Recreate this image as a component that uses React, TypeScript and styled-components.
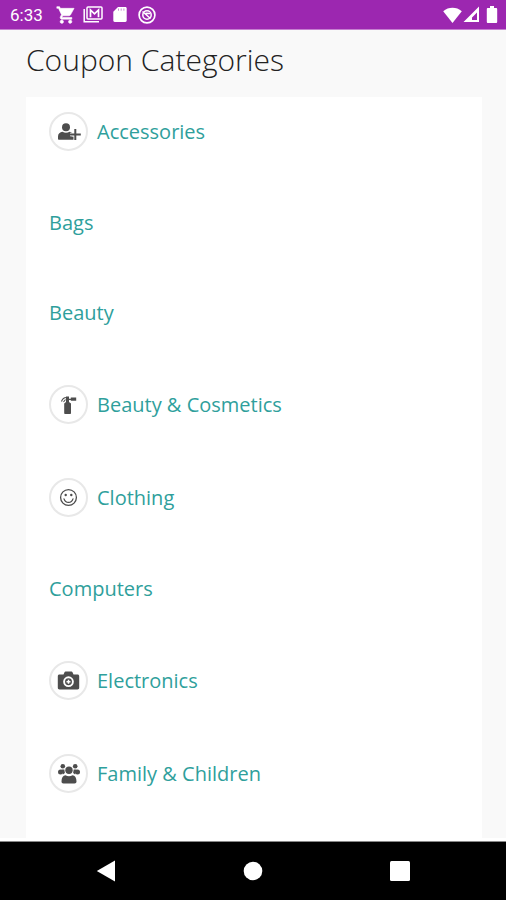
import React from "react";
import styled, { createGlobalStyle } from "styled-components";

const GlobalStyle = createGlobalStyle`
  *, *::before, *::after { box-sizing: border-box; }
  body { margin: 0; background: #f9f9f9; font-family: "Open Sans", "Noto Sans", sans-serif; }
`;

const Screen = styled.div`
  display: flex;
  flex-direction: column;
  height: 100vh;
  background: #f9f9f9;
`;

const StatusBar = styled.header`
  flex: none;
  display: flex;
  align-items: center;
  justify-content: space-between;
  height: 30px;
  padding: 0 8px 0 10px;
  background: #9c27b0;
  border-bottom: 1px solid #c57fd0;
  color: #fff;
`;

const StatusGroup = styled.div`
  display: flex;
  align-items: center;

  svg { display: block; flex: none; }
`;

const Notification = styled.span`
  display: grid;
  place-items: center;
  width: 27px;
`;

const Connectivity = styled.span`
  display: flex;
  align-items: center;
  gap: 1px;
  margin-right: 6px;
`;

const Clock = styled.time`
  font: 400 17px/20px Roboto, sans-serif;
  margin-right: 10px;
`;

const Content = styled.main`
  flex: 1;
  min-height: 0;
  overflow: hidden;
  display: flex;
  flex-direction: column;
  padding: 10px 24px 0 26px;
  border-bottom: 3px solid #fff;
`;

const Title = styled.h1`
  flex: none;
  margin: 0 0 17px;
  font-size: 30px;
  line-height: 40px;
  font-weight: 300;
  color: #222;
`;

const CategoryList = styled.ul`
  flex: 1 0 auto;
  display: flex;
  flex-direction: column;
  gap: 54px;
  margin: 0;
  padding: 15px 23px;
  list-style: none;
  background: #fff;
`;

const CategoryLink = styled.a<{ $withIcon: boolean }>`
  display: flex;
  align-items: center;
  gap: 9px;
  height: ${(p) => (p.$withIcon ? 39 : 36)}px;
  font-size: 20px;
  line-height: 26px;
  color: #2f9f9c;
  text-decoration: none;
`;

const IconCircle = styled.span`
  flex: none;
  display: grid;
  place-items: center;
  width: 39px;
  height: 39px;
  border: 2px solid #e8e8e8;
  border-radius: 50%;
  color: #4d4d4d;

  svg { display: block; }
`;

const NavBar = styled.nav`
  flex: none;
  display: flex;
  justify-content: space-around;
  height: 59px;
  padding: 0 33px;
  background: #000;
  border-top: 1px solid #888;
`;

const NavButton = styled.button`
  display: grid;
  place-items: center;
  width: 58px;
  padding: 0;
  border: 0;
  background: none;
  color: #fff;
  cursor: pointer;
`;

const CartIcon = () => (
  <svg width="20" height="20" viewBox="0 0 24 24" fill="currentColor" aria-hidden="true">
    <path d="M7 18c-1.100 0-1.990.9-1.990 2S5.900 22 7 22s2-.9 2-2-.9-2-2-2zM1 2v2h2l3.600 7.590-1.350 2.450C4.520 15.370 5.480 17 7 17h12v-2H7.420c-.14 0-.25-.11-.25-.25L8.100 13h7.450c.75 0 1.410-.41 1.750-1.030L21.700 4H5.210l-.94-2H1zm16 16c-1.100 0-1.990.9-1.990 2s.89 2 1.990 2 2-.9 2-2-.9-2-2-2z" stroke="currentColor" strokeWidth=".7" />
  </svg>
);

const MailStackIcon = () => (
  <svg width="20" height="17" viewBox="0 0 20 17" fill="none" stroke="currentColor" aria-hidden="true">
    <path d="M1.200 3v12.800H16" strokeWidth="1.500" />
    <rect x="4" y="1" width="15" height="12" rx="1" strokeWidth="1.500" />
    <path d="M7.500 11.200V4l4 3.800 4-3.800v7.200" strokeWidth="1.700" />
  </svg>
);

const SdCardIcon = () => (
  <svg width="14" height="17" viewBox="0 0 14 17" fill="currentColor" aria-hidden="true">
    <path d="M5 1h7.300c.8 0 1.400.6 1.400 1.400v12.200c0 .8-.6 1.400-1.400 1.400H1.700C.9 16 .3 15.400.3 14.600V5.800z" />
    <path d="M5.500 2.500v2.200M8.200 2.500v2.200M10.900 2.500v2.200" stroke="#bd70ca" strokeWidth=".8" />
  </svg>
);

const SyncRingIcon = () => (
  <svg width="18" height="18" viewBox="0 0 18 18" fill="none" stroke="currentColor" aria-hidden="true">
    <circle cx="9" cy="9" r="7.900" strokeWidth="1.700" />
    <circle cx="9" cy="9" r="4.200" strokeWidth="1.500" />
    <path d="M4.500 5.500l8 7M7.500 7.200l4.500.3" strokeWidth="1.500" />
  </svg>
);

const WifiIcon = () => (
  <svg width="19" height="16" viewBox="0 0 19 16" fill="currentColor" aria-hidden="true">
    <path d="M9.500 16L.2 4.300C5.500-.3 13.500-.3 18.800 4.300z" />
  </svg>
);

const SignalIcon = () => (
  <svg width="17" height="17" viewBox="0 0 17 17" aria-hidden="true">
    <path d="M.5 16L16 .5V16zM9 14h5V6.500l-5 5z" fill="currentColor" fillRule="evenodd" />
  </svg>
);

const BatteryIcon = () => (
  <svg width="12" height="17" viewBox="0 0 12 17" fill="currentColor" aria-hidden="true">
    <path d="M4 0h4v2h2c.7 0 1.200.5 1.200 1.200v12.500c0 .7-.5 1.300-1.200 1.300H2C1.300 17 .8 16.400.8 15.700V3.200C.8 2.500 1.300 2 2 2h2z" />
  </svg>
);

const UserPlusIcon = () => (
  <svg width="24" height="20" viewBox="0 0 24 20" fill="currentColor" aria-hidden="true">
    <circle cx="9" cy="5.300" r="4" />
    <path d="M1 17v-2.500C1 11.600 3 10 5.500 9.700c2 1.300 5 1.300 7 0 .8.100 1.500.3 2.100.7v4h2.700V17c0 .5-.3.800-.8.800H1.800C1.300 17.800 1 17.500 1 17z" />
    <path d="M18.300 7v11M13 12.500h10.600" stroke="#fff" strokeWidth="3.600" />
    <path d="M18.300 7v11M12.800 12.500h11" stroke="currentColor" strokeWidth="2" />
  </svg>
);

const SprayIcon = () => (
  <svg width="20" height="20" viewBox="0 0 20 20" fill="currentColor" aria-hidden="true">
    <path d="M7 1.500h3v2.200h1.800V2.600h5.400v3.200h-5.400V4.900H10v2l2 1.700v9.600c0 .5-.3.800-.8.800H6c-.5 0-.8-.3-.8-.8V8.600L7 6.900z" />
    <path d="M7.500 2.500C5 2.500 3.300 4 2.500 6.500M6.500 4.500L4.500 7" fill="none" stroke="currentColor" strokeWidth="1.100" />
  </svg>
);

const SmileIcon = () => (
  <svg width="20" height="20" viewBox="0 0 20 20" fill="none" stroke="currentColor" aria-hidden="true">
    <circle cx="9.500" cy="9.500" r="7.900" strokeWidth="1.300" />
    <path d="M5 10.800c.7 2.300 2.400 3.500 4.500 3.500s3.800-1.200 4.500-3.500" strokeWidth="1.200" strokeLinecap="round" />
    <circle cx="6.700" cy="7" r="1.200" fill="currentColor" stroke="none" />
    <circle cx="12.300" cy="7" r="1.200" fill="currentColor" stroke="none" />
  </svg>
);

const CameraIcon = () => (
  <svg width="23" height="20" viewBox="0 0 23 20" aria-hidden="true">
    <path d="M2.500 3.500h4l1-2.300c.2-.4.500-.7 1-.7h6c.5 0 .8.300 1 .7l1 2.300h4c1 0 1.700.7 1.700 1.700v11.600c0 1-.7 1.700-1.700 1.700h-18C1.500 18.500.8 17.800.8 16.800V5.200C.8 4.200 1.500 3.500 2.500 3.500z" fill="currentColor" />
    <circle cx="11.500" cy="10.700" r="4.400" fill="none" stroke="#fff" strokeWidth="1.900" />
    <path d="M11.500 8.700v4M9.500 10.700h4" stroke="#fff" strokeWidth="1.500" />
  </svg>
);

const FamilyIcon = () => (
  <svg width="24" height="22" viewBox="0 0 24 22" fill="currentColor" aria-hidden="true">
    <circle cx="5.800" cy="3.300" r="2.300" />
    <circle cx="18.200" cy="3.300" r="2.300" />
    <circle cx="3.500" cy="9" r="2.500" />
    <circle cx="20.500" cy="9" r="2.500" />
    <circle cx="12" cy="7.300" r="3.700" />
    <path d="M4.500 6.500h2.800l.6 3.500-2 1.500zM19.500 6.500h-2.800l-.6 3.500 2 1.500z" />
    <path d="M4.500 18.500c0-4 1.500-6 4-6.300 2 1.300 5 1.300 7 0 2.500.3 4 2.300 4 6.300 0 1.300-.7 2-2 2h-11c-1.300 0-2-.7-2-2z" />
  </svg>
);

interface Category {
  name: string;
  Icon?: React.ComponentType;
}

const categories: Category[] = [
  { name: "Accessories", Icon: UserPlusIcon },
  { name: "Bags" },
  { name: "Beauty" },
  { name: "Beauty & Cosmetics", Icon: SprayIcon },
  { name: "Clothing", Icon: SmileIcon },
  { name: "Computers" },
  { name: "Electronics", Icon: CameraIcon },
  { name: "Family & Children", Icon: FamilyIcon },
];

const notifications = [CartIcon, MailStackIcon, SdCardIcon, SyncRingIcon];

export default function App() {
  return (
    <>
      <GlobalStyle />
      <Screen>
        <StatusBar>
          <StatusGroup>
            <Clock>6:33</Clock>
            {notifications.map((Icon, index) => (
              <Notification key={index}>
                <Icon />
              </Notification>
            ))}
          </StatusGroup>
          <StatusGroup>
            <Connectivity>
              <WifiIcon />
              <SignalIcon />
            </Connectivity>
            <BatteryIcon />
          </StatusGroup>
        </StatusBar>
        <Content>
          <Title>Coupon Categories</Title>
          <CategoryList>
            {categories.map(({ name, Icon }) => (
              <li key={name}>
                <CategoryLink href="#" $withIcon={Boolean(Icon)}>
                  {Icon && (
                    <IconCircle>
                      <Icon />
                    </IconCircle>
                  )}
                  {name}
                </CategoryLink>
              </li>
            ))}
          </CategoryList>
        </Content>
        <NavBar aria-label="System">
          <NavButton type="button" aria-label="Back">
            <svg width="20" height="22" viewBox="0 0 20 22" fill="currentColor" aria-hidden="true">
              <path d="M19 .5v21L.8 11z" />
            </svg>
          </NavButton>
          <NavButton type="button" aria-label="Home">
            <svg width="20" height="20" viewBox="0 0 20 20" fill="currentColor" aria-hidden="true">
              <circle cx="10" cy="10" r="9.300" />
            </svg>
          </NavButton>
          <NavButton type="button" aria-label="Recent apps">
            <svg width="20" height="20" viewBox="0 0 20 20" fill="currentColor" aria-hidden="true">
              <rect width="20" height="20" rx="1.500" />
            </svg>
          </NavButton>
        </NavBar>
      </Screen>
    </>
  );
}
